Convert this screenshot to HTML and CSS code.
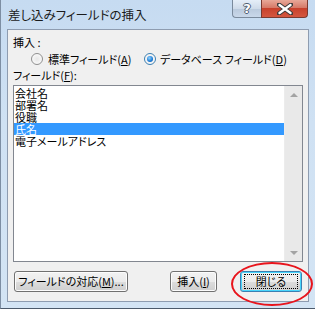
FILE: index.html
```html
<!DOCTYPE html>
<html lang="ja">
<head>
<meta charset="utf-8">
<link rel="stylesheet" href="styles.css">
</head>
<body>
<div class="window">
  <div class="titlebar">
    <div class="title">差し込みフィールドの挿入</div>
    <div class="controls">
      <div class="ctl help"><span>?</span></div>
      <div class="ctl close">
        <svg width="16" height="12" viewBox="0 0 16 12"><path d="M2 1.5 L14 10.5 M14 1.5 L2 10.5" stroke="#3a3a3a" stroke-width="4.2" stroke-linecap="round"/><path d="M2.5 2 L13.5 10 M13.5 2 L2.5 10" stroke="#fff" stroke-width="2.4" stroke-linecap="round"/></svg>
      </div>
    </div>
  </div>
  <div class="client">
    <div class="label first">挿入 :</div>
    <div class="radios">
      <div class="radio r1"><span class="dot"></span><span>標準フィールド(<u>A</u>)</span></div>
      <div class="radio on"><span class="dot"></span><span>データベース フィールド(<u>D</u>)</span></div>
    </div>
    <div class="label">フィールド(<u>F</u>):</div>
    <div class="listbox">
      <div class="items">
        <div class="item">会社名</div>
        <div class="item">部署名</div>
        <div class="item">役職</div>
        <div class="item sel">氏名</div>
        <div class="item">電子メールアドレス</div>
      </div>
      <div class="scrollbar">
        <span class="arrow up"></span>
        <span class="arrow down"></span>
      </div>
    </div>
    <div class="buttons">
      <div class="btn b1">フィールドの対応(<u>M</u>)...</div>
      <div class="btn b2">挿入(<u>I</u>)</div>
      <div class="btn b3"><span class="focus">閉じる</span></div>
    </div>
  </div>
  <div class="ellipse"></div>
</div>
</body>
</html>
```
FILE: styles.css
```css
* { box-sizing: border-box; }
html, body { margin: 0; padding: 0; }
body {
  width: 315px; height: 309px; overflow: hidden;
  font-family: "Noto Sans CJK JP", "Noto Sans", sans-serif;
  font-size: 11px; color: #000;
  font-feature-settings: "palt";
}
u { text-decoration: underline; text-underline-offset: 1px; }
.window {
  position: relative;
  width: 315px; height: 309px;
  background: linear-gradient(180deg, #c6dbf1 0%, #cfe1f3 40%, #d3e4f4 100%);
  border-left: 1px solid #7d8ea3;
  border-bottom: 1px solid #4c5a6b;
  display: flex; flex-direction: column;
}
.titlebar {
  height: 29px;
  display: flex; justify-content: space-between; align-items: flex-start;
  padding-left: 7px; padding-right: 7px;
}
.title {
  margin-top: 7px;
  font-size: 12.5px; line-height: 16px;
  color: #1a1a1a;
}
.controls { display: flex; }
.ctl {
  height: 18px;
  display: flex; align-items: center; justify-content: center;
  border: 1px solid #7a8a9c; border-top: none;
}
.help {
  width: 29px;
  border-radius: 0 0 0 4px;
  border-right: none;
  background: linear-gradient(180deg, #e5eef8 0%, #cfdbe9 50%, #b9c9dc 51%, #c9d8ea 100%);
}
.help span {
  font-family: "DejaVu Sans", sans-serif; font-weight: bold; font-size: 13px;
  color: #fff; line-height: 16px;
  text-shadow: 1px 0 0 #4d5d70, -1px 0 0 #4d5d70, 0 1px 0 #4d5d70, 0 -1px 0 #4d5d70;
}
.close {
  width: 47px;
  border-radius: 0 0 4px 0;
  background: linear-gradient(180deg, #e8a898 0%, #d67a68 45%, #c8412c 50%, #d4573f 100%);
  border-color: #7a3a30;
}
.client {
  margin: 0 6px 0 6px;
  height: 273px;
  background: #f0f0f0;
  border: 1px solid #8e9cb0;
  padding: 0 5px;
  display: flex; flex-direction: column;
}
.label { line-height: 13px; height: 13px; margin-top: 3px; white-space: nowrap; }
.label.first { margin-top: 6px; }
.radios {
  display: flex; align-items: center; height: 14px; margin-top: 3px;
  padding-left: 18px;
}
.radio { display: flex; align-items: center; line-height: 13px; white-space: nowrap; }
.radio.r1 { width: 113px; }
.dot {
  flex: none;
  width: 12px; height: 12px; border-radius: 50%;
  border: 1px solid #8f8f8f;
  background: radial-gradient(circle, #e6e6e6 0%, #f8f8f8 70%);
  margin-right: 5px; position: relative;
}
.radio.on .dot { border-color: #3c7fb1; margin-right: 4px; }
.radio.on .dot::after {
  content: ""; position: absolute; left: 2px; top: 2px; width: 6px; height: 6px; border-radius: 50%;
  background: radial-gradient(circle at 40% 35%, #8fd2ff 0%, #1b7bd6 60%, #0c4f9e 100%);
}
.listbox {
  margin-top: 3px;
  height: 177px;
  border: 1px solid #828790;
  background: #fff;
  display: flex;
}
.items { flex: 1; padding-top: 1px; }
.item { line-height: 12px; height: 12px; padding-left: 1px; white-space: nowrap; }
.item.sel { background: #3399ff; color: #fff; }
.scrollbar {
  width: 18px;
  background: #e9e9e9;
  border-left: 1px solid #ececec;
  display: flex; flex-direction: column; justify-content: space-between; align-items: center;
  padding: 7px 0 6px;
}
.arrow { width: 0; height: 0; border-left: 4px solid transparent; border-right: 4px solid transparent; }
.arrow.up { border-bottom: 4px solid #a3a3a3; }
.arrow.down { border-top: 4px solid #a3a3a3; }
.buttons {
  display: flex; margin-top: 9px; height: 21px;
}
.btn {
  height: 21px;
  border: 1px solid #707070; border-radius: 3px;
  background: linear-gradient(180deg, #f2f2f2 0%, #ebebeb 50%, #dddddd 51%, #cfcfcf 100%);
  display: flex; align-items: center; justify-content: center;
  line-height: 13px; white-space: nowrap;
  box-shadow: inset 0 0 0 1px #fcfcfc;
}
.b1 { width: 114px; margin-left: 1px; }
.b2 { width: 47px; margin-left: auto; }
.b3 { width: 62px; margin-left: 23px; margin-right: 1px; border-color: #3c7fb1; box-shadow: inset 0 0 0 1px #48d5fb; }
.focus {
  border: 1px dotted #000; width: 54px; height: 15px;
  display: flex; align-items: center; justify-content: center;
}
.ellipse {
  position: absolute; left: 230px; top: 262px; width: 82px; height: 44px;
  border: 2px solid #e8141c; border-radius: 50%;
}
```
